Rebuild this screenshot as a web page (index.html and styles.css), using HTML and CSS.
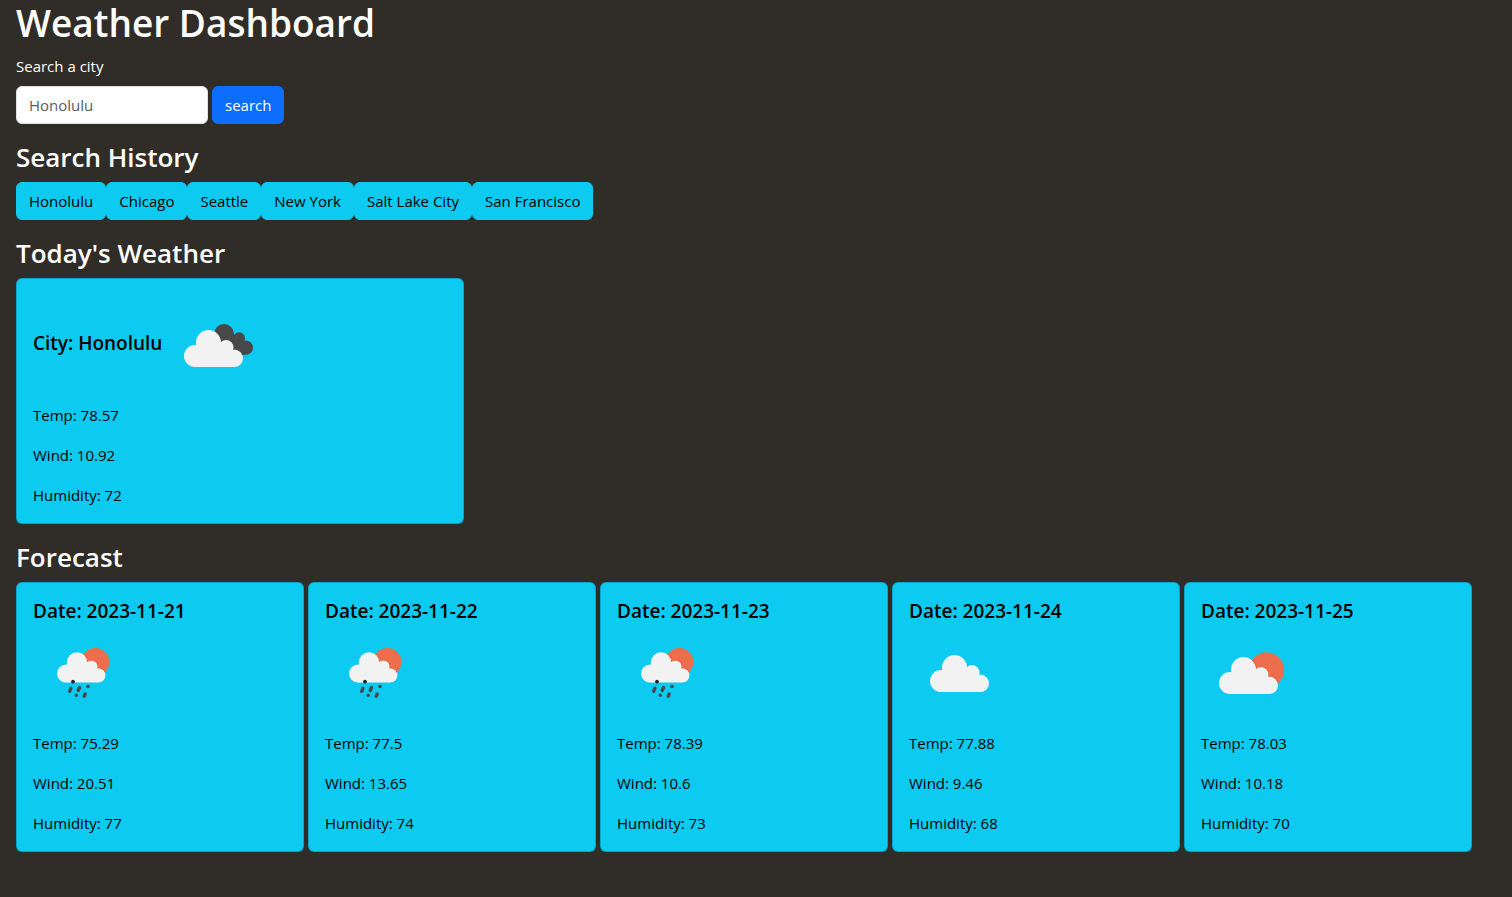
FILE: index.html
```html
<!DOCTYPE html>
<html lang="en">
<head>
<meta charset="utf-8">
<title>Weather Dashboard</title>
<link rel="stylesheet" href="styles.css">
</head>
<body>
<svg class="sprites" aria-hidden="true">
  <defs>
    <g id="cloud">
      <circle cx="11" cy="26" r="11"/>
      <circle cx="24.500" cy="12.500" r="12.500"/>
      <circle cx="42" cy="17.500" r="7.500"/>
      <circle cx="50.300" cy="28.300" r="8.700"/>
      <path d="M11 37V18H42V17H48V22H50V37Z"/>
    </g>
    <clipPath id="sun-clip"><circle cx="65.500" cy="47" r="17.700"/></clipPath>
    <clipPath id="rain-sun-clip"><circle cx="62.300" cy="39" r="14"/></clipPath>
    <g id="back-cloud">
      <circle cx="58" cy="39" r="10"/>
      <circle cx="73" cy="43.300" r="6"/>
      <circle cx="79.700" cy="52.700" r="7.300"/>
      <path d="M50 40H74L78 46V60H60Z"/>
    </g>
    <symbol id="icon-clouds" viewBox="0 0 100 100">
      <use href="#back-cloud" fill="#484849"/>
      <use href="#cloud" x="18" y="35" fill="#f2f2f2"/>
    </symbol>
    <symbol id="icon-cloud" viewBox="0 0 100 100">
      <use href="#cloud" x="21" y="32" fill="#f2f2f2"/>
    </symbol>
    <symbol id="icon-sun-cloud" viewBox="0 0 100 100">
      <circle cx="65.500" cy="47" r="17.700" fill="#ec6e4c"/>
      <g clip-path="url(#sun-clip)"><use href="#cloud" x="18.500" y="33.500" fill="#e84a24"/></g>
      <use href="#cloud" x="18" y="34" fill="#f2f2f2"/>
    </symbol>
    <symbol id="icon-rain" viewBox="0 0 100 100">
      <circle cx="62.300" cy="39" r="14" fill="#ec6e4c"/>
      <g clip-path="url(#rain-sun-clip)"><use href="#cloud" transform="translate(24.500 28.700) scale(.82)" fill="#e84a24"/></g>
      <use href="#cloud" transform="translate(24 29.200) scale(.82)" fill="#f2f2f2"/>
      <circle cx="40" cy="58.700" r="1.900" fill="#262627"/>
      <g fill="#484849"><circle cx="55" cy="63.500" r="1.800"/><circle cx="43.300" cy="72.300" r="1.700"/></g>
      <path d="M37.900 65.300L36.700 68.300M46.500 64.500L45.200 67.500M52.200 71L51.200 73.300" stroke="#484849" stroke-width="3.400" stroke-linecap="round"/>
    </symbol>
  </defs>
</svg>
<main class="dashboard">
  <h1>Weather Dashboard</h1>
  <form class="search">
    <label for="city">Search a city</label>
    <div class="search-row">
      <input id="city" class="field" type="text" placeholder="Honolulu">
      <button class="btn btn-primary" type="button">search</button>
    </div>
  </form>
  <section>
    <h2>Search History</h2>
    <div class="history">
      <button class="btn btn-info" type="button">Honolulu</button>
      <button class="btn btn-info" type="button">Chicago</button>
      <button class="btn btn-info" type="button">Seattle</button>
      <button class="btn btn-info" type="button">New York</button>
      <button class="btn btn-info" type="button">Salt Lake City</button>
      <button class="btn btn-info" type="button">San Francisco</button>
    </div>
  </section>
  <section>
    <h2>Today's Weather</h2>
    <article class="card today">
      <div class="city"><h3>City: Honolulu</h3><svg class="icon"><use href="#icon-clouds"/></svg></div>
      <p>Temp: 78.57</p>
      <p>Wind: 10.92</p>
      <p>Humidity: 72</p>
    </article>
  </section>
  <section>
    <h2>Forecast</h2>
    <div class="forecast">
      <article class="card day">
        <h3>Date: 2023-11-21</h3>
        <svg class="icon"><use href="#icon-rain"/></svg>
        <p>Temp: 75.29</p>
        <p>Wind: 20.51</p>
        <p>Humidity: 77</p>
      </article>
      <article class="card day">
        <h3>Date: 2023-11-22</h3>
        <svg class="icon"><use href="#icon-rain"/></svg>
        <p>Temp: 77.5</p>
        <p>Wind: 13.65</p>
        <p>Humidity: 74</p>
      </article>
      <article class="card day">
        <h3>Date: 2023-11-23</h3>
        <svg class="icon"><use href="#icon-rain"/></svg>
        <p>Temp: 78.39</p>
        <p>Wind: 10.6</p>
        <p>Humidity: 73</p>
      </article>
      <article class="card day">
        <h3>Date: 2023-11-24</h3>
        <svg class="icon"><use href="#icon-cloud"/></svg>
        <p>Temp: 77.88</p>
        <p>Wind: 9.46</p>
        <p>Humidity: 68</p>
      </article>
      <article class="card day">
        <h3>Date: 2023-11-25</h3>
        <svg class="icon"><use href="#icon-sun-cloud"/></svg>
        <p>Temp: 78.03</p>
        <p>Wind: 10.18</p>
        <p>Humidity: 70</p>
      </article>
    </div>
  </section>
</main>
</body>
</html>
```
FILE: styles.css
```css
* {
  box-sizing: border-box;
}

body {
  margin: 0;
  background: #302d28;
  color: #fff;
  font: 15px/24px "Segoe UI", "Open Sans", "Noto Sans", sans-serif;
}

.sprites {
  position: absolute;
  width: 0;
  height: 0;
}

h1, h2, h3, p {
  margin: 0;
}

h1 {
  font-size: 37px;
  line-height: 46px;
  font-weight: 600;
}

h2 {
  margin-bottom: 7px;
  font-size: 26px;
  line-height: 35px;
  font-weight: 600;
}

h3 {
  font-size: 19px;
  line-height: 24px;
  font-weight: 600;
}

.dashboard {
  display: flex;
  flex-direction: column;
  gap: 16px;
  padding: 0 16px;
}

.search {
  margin-top: -8px;
}

.search label {
  display: inline-block;
  margin-bottom: 8px;
}

.search-row {
  display: flex;
  gap: 4px;
}

.field {
  width: 192px;
  height: 38px;
  padding: 6px 12px;
  border: 1px solid #dee2e6;
  border-radius: 6px;
  background: #fff;
  color: #212529;
  font: inherit;
}

.field::placeholder {
  color: #585b5e;
  opacity: 1;
}

.btn {
  height: 38px;
  padding: 6px 12px;
  border: 1px solid transparent;
  border-radius: 6px;
  font: inherit;
  cursor: pointer;
}

.btn-primary {
  background: #0d6efd;
  border-color: #0d6efd;
  color: #fff;
}

.btn-info {
  background: #0dcaf0;
  border-color: #0dcaf0;
  color: #000;
}

.history {
  display: flex;
  flex-wrap: wrap;
}

.card {
  display: flex;
  flex-direction: column;
  gap: 16px;
  padding: 16px;
  border: 1px solid rgba(0, 0, 0, .18);
  border-radius: 6px;
  background: #0dcaf0;
  color: #000;
}

.today {
  width: 448px;
  max-width: 100%;
}

.city {
  display: flex;
  align-items: center;
  gap: 4px;
  margin-bottom: -8px;
}

.city h3 {
  padding-bottom: 4px;
}

.icon {
  flex: none;
  width: 100px;
  height: 100px;
}

.forecast {
  display: flex;
  flex-wrap: wrap;
  gap: 4px;
}

.day {
  width: 288px;
}

.day .icon {
  margin: -16px 0 -8px;
}
```
